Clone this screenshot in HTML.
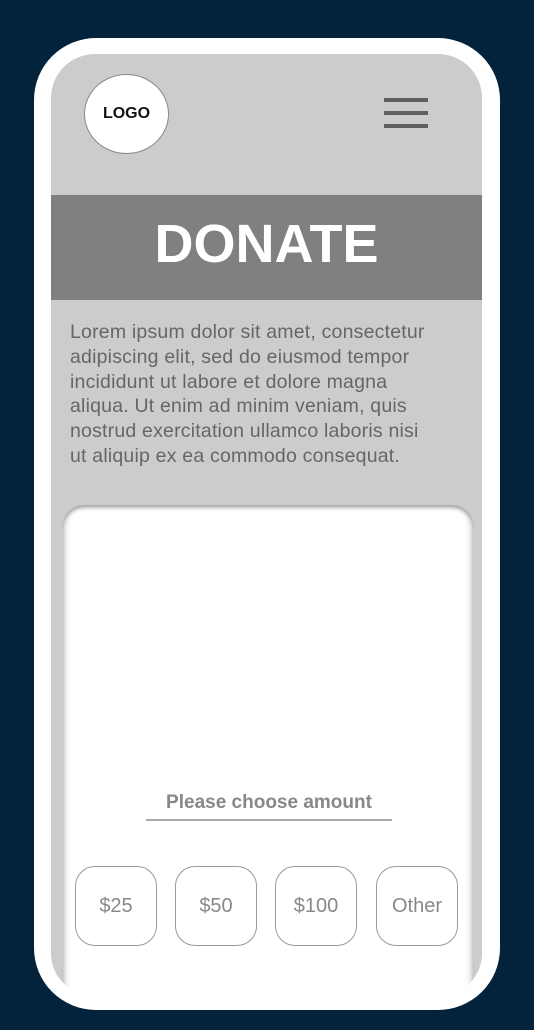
<!DOCTYPE html>
<html><head><style>
*{margin:0;padding:0;box-sizing:border-box}
body{width:534px;height:1030px;background:#03233c;position:relative;overflow:hidden;font-family:"Liberation Sans",sans-serif}
.frame{position:absolute;left:34px;top:38px;width:466px;height:972px;background:#fff;border-radius:62px}
.screen{position:absolute;left:51px;top:54px;width:431px;height:940px;background:#cccccc;border-radius:44px 44px 40px 40px;overflow:hidden}
.logo{position:absolute;left:33px;top:20px;width:85px;height:80px;border-radius:50%;background:#fff;border:1px solid #888;font-weight:bold;font-size:16px;line-height:78px;text-align:center;color:#111}
.bar{position:absolute;left:333px;width:44px;height:4px;background:#606060}
.band{position:absolute;left:0;top:141px;width:431px;height:105px;background:#808080;color:#fff;font-weight:bold;font-size:54px;text-align:center;line-height:98px}
.txt{position:absolute;left:19px;top:266px;width:420px;font-size:19.5px;line-height:24.8px;color:#666;white-space:nowrap;letter-spacing:0.2px}
.card{position:absolute;left:11px;top:451px;width:412px;height:500px;background:#fff;border-radius:22px;box-shadow:inset 0 2px 4px #999,inset 4px 0 6px #ddd,inset -4px 0 6px #ddd}
.pc{position:absolute;left:84px;top:287px;width:246px;border-bottom:2px solid #aaa;text-align:center;font-size:19px;font-weight:bold;color:#888;padding-bottom:5px}
.btn{position:absolute;top:361px;width:82px;height:80px;border:1.5px solid #999;border-radius:20px;text-align:center;line-height:78px;font-size:20px;color:#888}
</style></head><body>
<div class="frame"></div>
<div class="screen">
<div class="logo">LOGO</div>
<div class="bar" style="top:44px"></div><div class="bar" style="top:57px"></div><div class="bar" style="top:70px"></div>
<div class="band">DONATE</div>
<div class="txt">Lorem ipsum dolor sit amet, consectetur<br>adipiscing elit, sed do eiusmod tempor<br>incididunt ut labore et dolore magna<br>aliqua. Ut enim ad minim veniam, quis<br>nostrud exercitation ullamco laboris nisi<br>ut aliquip ex ea commodo consequat.</div>
<div class="card">
<div class="pc">Please choose amount</div>
<div class="btn" style="left:13px">$25</div>
<div class="btn" style="left:113px">$50</div>
<div class="btn" style="left:213px">$100</div>
<div class="btn" style="left:314px">Other</div>
</div>
</div>
</body></html>
